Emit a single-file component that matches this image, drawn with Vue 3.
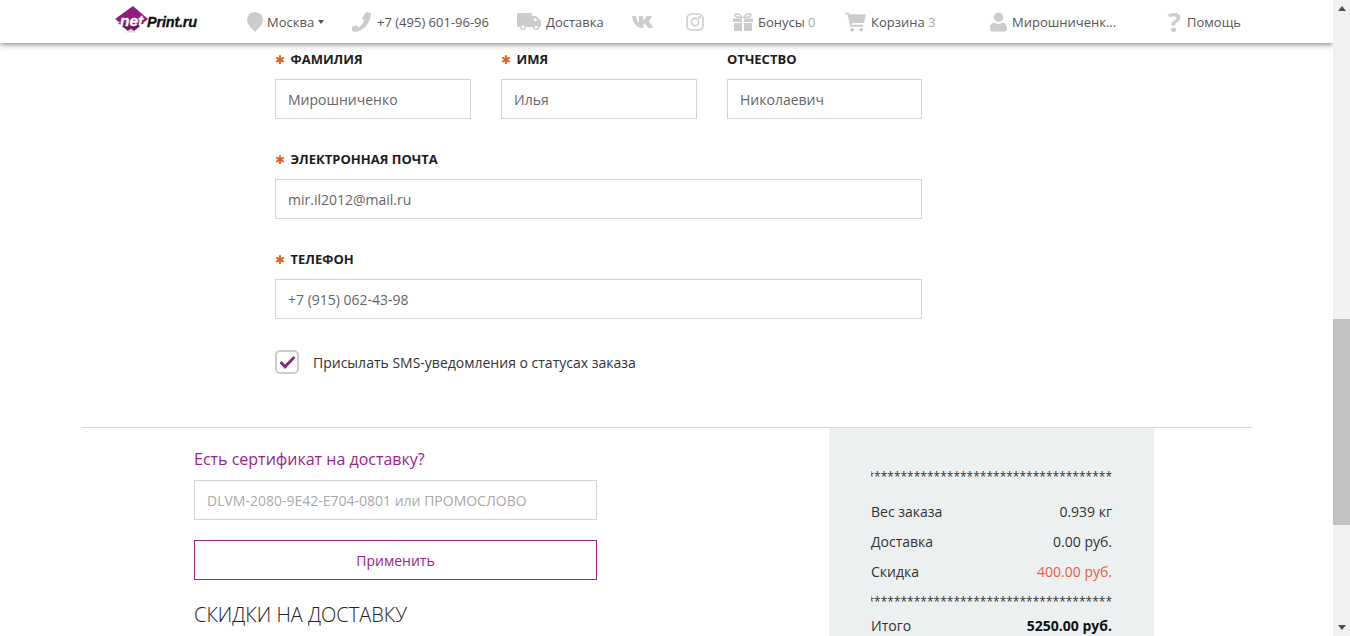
<template>
  <div class="page">
    <div class="viewport">
      <header class="topbar">
        <a class="logo">
          <svg class="logo-mark" width="33" height="27" viewBox="0 0 33 27">
            <polygon points="18,0 33,13 17,26 0,13" fill="#8e1f80" />
            <polygon points="3,17 29,17 19,25 16,22 13,25" fill="#6f1664" />
            <polygon points="16,22.5 21,26.5 11,26.5" fill="#d5d5d5" />
          </svg>
          <span class="logo-net">net</span><span class="logo-print">Print.ru</span>
        </a>
        <nav class="nav">
          <div class="nav-item">
            <svg width="16" height="20" viewBox="0 0 16 20"><path d="M8 0a8 8 0 0 1 8 8c0 4-5 9-8 12C5 17 0 12 0 8a8 8 0 0 1 8-8z" /></svg>
            <span class="city">Москва</span><i class="caret"></i>
          </div>
          <div class="nav-item">
            <svg width="20" height="20" viewBox="0 0 20 20"><path d="M14 0l5 1c.5 9-7 18-16 19l-3-1-.5-4 5-2 2 2.500c3-1.500 5-4.500 5.500-8L9.500 7z" /></svg>
            <span>+7 (495) 601-96-96</span>
          </div>
          <div class="nav-item">
            <svg width="24" height="20" viewBox="0 0 24 20"><path d="M1.500 1h12c.8 0 1.500.7 1.500 1.500V4h4l5 5v6h-2a3 3 0 0 1-6 0H9a3 3 0 0 1-6 0H1.500C.7 15 0 14.300 0 13.500v-11C0 1.700.7 1 1.500 1zM17 6v3h4l-3-3zM6 13.500a1.500 1.500 0 1 0 0 3 1.500 1.500 0 0 0 0-3zm13 0a1.500 1.500 0 1 0 0 3 1.500 1.500 0 0 0 0-3z" fill-rule="evenodd" /></svg>
            <span>Доставка</span>
          </div>
          <div class="nav-item">
            <svg width="21" height="12" viewBox="0 0 21 12"><path d="M0 0h4c.5 3 1.500 6 3 7V0h4v4c1.500-.5 3-2.500 3.500-4H20c-.5 2.500-2.500 4.500-3.500 5.500 1.500 1 3.500 3.500 4.500 6.500h-5c-.7-2-2.500-4-4.500-4.500V12h-2C5 12 1 7 0 0z" /></svg>
          </div>
          <div class="nav-item">
            <svg width="18" height="18" viewBox="0 0 18 18" class="insta"><rect x="1" y="1" width="16" height="16" rx="4.500" /><circle cx="9" cy="9" r="3.600" /><circle cx="13.500" cy="4.500" r=".6" /></svg>
          </div>
          <div class="nav-item">
            <svg width="20" height="18" viewBox="0 0 20 18"><path d="M0 5.500h9V9H0zM11 5.500h9V9h-9zM1 10h8v8H2.500C1.700 18 1 17.300 1 16.500zM11 10h8v6.500c0 .8-.7 1.500-1.500 1.500H11zM4 0c2.500 0 4.500 2 6 4.500C11.500 2 13.500 0 16 0c1.800 0 2.800 1 2.800 2.300S17.500 5 15 5H5C2.500 5 1.200 3.600 1.200 2.300S2.200 0 4 0zm.2 1.800c-.8 0-1.200.3-1.200.7 0 .5.800.9 2 .9h2.800C6.800 2.300 5.500 1.800 4.200 1.800zm11.600 0c-1.300 0-2.600.5-3.600 1.600H15c1.200 0 2-.4 2-.9 0-.4-.4-.7-1.200-.7z" fill-rule="evenodd" /></svg>
            <span>Бонусы <em>0</em></span>
          </div>
          <div class="nav-item">
            <svg width="21" height="20" viewBox="0 0 22 20"><path d="M0 0h4l.6 2H22l-2 9H7l.4 2H19v2H5.600L2.600 2H0z" /><circle cx="7.500" cy="18" r="2" /><circle cx="17" cy="18" r="2" /></svg>
            <span>Корзина <em>3</em></span>
          </div>
          <div class="nav-item">
            <svg width="17" height="20" viewBox="0 0 18 20"><circle cx="9" cy="5" r="5" /><path d="M0 17c0-4 2-6.500 5-6.500 1 .8 2.500 1.300 4 1.300s3-.5 4-1.300c3 0 5 2.500 5 6.500 0 2-1 3-2.500 3h-13C1 20 0 19 0 17z" /></svg>
            <span>Мирошниченк...</span>
          </div>
          <div class="nav-item">
            <span class="help-mark">?</span>
            <span>Помощь</span>
          </div>
        </nav>
      </header>

      <section class="contacts">
        <div class="row-three">
          <div class="field" v-for="f in nameFields" :key="f.label">
            <label :class="{ req: f.required }">{{ f.label }}</label>
            <input class="text-input" :value="f.value" readonly />
          </div>
        </div>
        <div class="field">
          <label class="req">Электронная почта</label>
          <input class="text-input" value="mir.il2012@mail.ru" readonly />
        </div>
        <div class="field">
          <label class="req">Телефон</label>
          <input class="text-input" value="+7 (915) 062-43-98" readonly />
        </div>
        <div class="sms">
          <span class="check">
            <svg width="17" height="13" viewBox="0 0 17 13"><path d="M.5 7l2-2L6 8.500 14.500 0l2 2L6 13z" fill="#8e2a82" /></svg>
          </span>
          <span>Присылать SMS-уведомления о статусах заказа</span>
        </div>
      </section>

      <section class="bottom">
        <div class="promo">
          <h3 class="promo-title">Есть сертификат на доставку?</h3>
          <input class="text-input" placeholder="DLVM-2080-9E42-E704-0801 или ПРОМОСЛОВО" />
          <button class="apply">Применить</button>
          <h2 class="discounts">Скидки на доставку</h2>
        </div>
        <aside class="summary">
          <div class="stars">{{ stars }}</div>
          <div class="sum-rows">
            <div class="sum-row" v-for="r in rows" :key="r.name">
              <span>{{ r.name }}</span>
              <span :class="{ minus: r.accent }">{{ r.value }}</span>
            </div>
          </div>
          <div class="stars stars-low">{{ stars }}</div>
          <div class="sum-row total">
            <span>Итого</span>
            <b>5250.00 руб.</b>
          </div>
        </aside>
      </section>
    </div>

    <div class="scrollbar">
      <i class="arrow up"></i>
      <div class="track"><div class="thumb"></div></div>
      <i class="arrow down"></i>
    </div>
  </div>
</template>

<script setup>
const nameFields = [
  { label: 'Фамилия', value: 'Мирошниченко', required: true },
  { label: 'Имя', value: 'Илья', required: true },
  { label: 'Отчество', value: 'Николаевич', required: false }
]

const rows = [
  { name: 'Вес заказа', value: '0.939 кг' },
  { name: 'Доставка', value: '0.00 руб.' },
  { name: 'Скидка', value: '400.00 руб.', accent: true }
]

const stars = '*'.repeat(38)
</script>

<style>
html, body { margin: 0; height: 100%; overflow: hidden; background: #fff; }
</style>

<style scoped>
.page {
  display: flex;
  width: 1350px;
  height: 636px;
  overflow: hidden;
  font-family: "Open Sans", "Noto Sans", sans-serif;
  font-size: 14px;
  color: #222;
}
.viewport {
  width: 1333px;
  height: 636px;
  overflow: hidden;
  flex: none;
}

/* шапка */
.topbar {
  position: relative;
  z-index: 5;
  display: flex;
  align-items: center;
  height: 43px;
  padding-left: 115px;
  background: #fff;
  box-shadow: 0 1px 6px rgba(0, 0, 0, .55);
}
.logo {
  display: flex;
  align-items: center;
  width: 132px;
  flex: none;
  position: relative;
  font-family: "Liberation Sans", sans-serif;
  font-weight: 700;
  font-style: italic;
}
.logo-mark { flex: none; margin-bottom: 4px; }
.logo-net {
  position: absolute;
  left: 5px;
  top: 7px;
  font-size: 15.500px;
  line-height: 16px;
  color: #fff;
  -webkit-text-stroke: .3px #fff;
}
.logo-print {
  margin-left: -1px;
  font-size: 14.500px;
  letter-spacing: -.2px;
  color: #111;
  -webkit-text-stroke: .3px #111;
}
.nav {
  display: grid;
  grid-template-columns: 105px 165px 115px 54px 47px 112px 145px 177px auto;
  align-items: center;
}
.nav-item {
  display: flex;
  align-items: center;
  gap: 5px;
  font-size: 13px;
  color: #555;
  white-space: nowrap;
}
.nav-item svg { fill: #ccc; flex: none; }
.nav-item em { font-style: normal; color: #aaa; }
.insta { fill: none !important; stroke: #ccc; stroke-width: 1.6; }
.city { margin-left: -1px; }
.caret {
  width: 0;
  height: 0;
  margin-left: -1px;
  border: 3.500px solid transparent;
  border-top: 4px solid #555;
  border-bottom: 0;
}
.help-mark {
  width: 15px;
  font-size: 27px;
  line-height: 20px;
  font-weight: 700;
  color: #ccc;
  text-align: center;
}

/* контактные данные */
.contacts {
  width: 647px;
  margin-left: 275px;
  padding-top: 7px;
}
.row-three {
  display: grid;
  grid-template-columns: 196px 196px 195px;
  column-gap: 30px;
}
.field { margin-bottom: 31px; }
.field label {
  display: block;
  height: 20px;
  margin-bottom: 9px;
  font-size: 13px;
  line-height: 18px;
  font-weight: 700;
  text-transform: uppercase;
  color: #1c1c1c;
}
.field label.req::before {
  content: "✱";
  display: inline-block;
  width: 15.500px;
  font-size: 12px;
  font-weight: 400;
  color: #d9622b;
  font-family: "DejaVu Sans", sans-serif;
}
.text-input {
  display: block;
  box-sizing: border-box;
  width: 100%;
  height: 40px;
  padding: 0 12px;
  border: 1px solid #d4d4d4;
  border-radius: 0;
  outline: none;
  background: #fff;
  font-family: inherit;
  font-size: 14px;
  color: #666;
}
.text-input::placeholder { color: #a9a9a9; opacity: 1; }
.sms {
  display: flex;
  align-items: center;
  gap: 14px;
  margin-top: 2px;
  margin-bottom: 53px;
  font-size: 14px;
  color: #333;
}
.check {
  display: flex;
  align-items: center;
  justify-content: center;
  box-sizing: border-box;
  width: 24px;
  height: 24px;
  border: 2px solid #ccc;
  border-radius: 5px;
}

/* промокод и итог */
.bottom {
  display: flex;
  margin: 0 81px 0 82px;
  border-top: 1px solid #d8d8d8;
  height: 209px;
}
.promo {
  width: 403px;
  margin-left: 112px;
  padding-top: 20px;
}
.promo-title {
  margin: 0 0 10px;
  font-size: 16px;
  line-height: 22px;
  font-weight: 400;
  color: #98248c;
}
.apply {
  display: block;
  box-sizing: border-box;
  width: 100%;
  height: 40px;
  margin-top: 20px;
  border: 1px solid #98248c;
  background: #fff;
  font-family: inherit;
  font-size: 14px;
  color: #98248c;
}
.discounts {
  margin: 21px 0 0;
  font-size: 20px;
  line-height: 27px;
  font-weight: 300;
  text-transform: uppercase;
  color: #222;
}
.summary {
  width: 325px;
  box-sizing: border-box;
  margin-left: 232px;
  padding: 39px 42px 0;
  background: #ecf0f1;
}
.stars {
  display: flex;
  justify-content: flex-end;
  height: 20px;
  overflow: hidden;
  font-size: 12px;
  line-height: 20px;
  white-space: nowrap;
  color: #333;
}
.stars-low { margin-top: 6px; }
.sum-rows { margin-top: 9px; }
.sum-row {
  display: flex;
  justify-content: space-between;
  height: 30px;
  align-items: center;
  color: #333;
}
.minus { color: #e2603c; }
.total { margin-top: -2px; }
.total b { color: #111; }

/* полоса прокрутки */
.scrollbar {
  display: flex;
  flex-direction: column;
  width: 17px;
  flex: none;
  background: #f1f1f1;
}
.arrow {
  display: block;
  width: 0;
  height: 0;
  margin: 6px auto;
  border: 4px solid transparent;
}
.arrow.up { border-top: 0; border-bottom: 5px solid #505050; }
.arrow.down { border-bottom: 0; border-top: 5px solid #505050; }
.track { flex: 1; padding-top: 302px; }
.thumb { height: 206px; background: #c1c1c1; }
</style>
